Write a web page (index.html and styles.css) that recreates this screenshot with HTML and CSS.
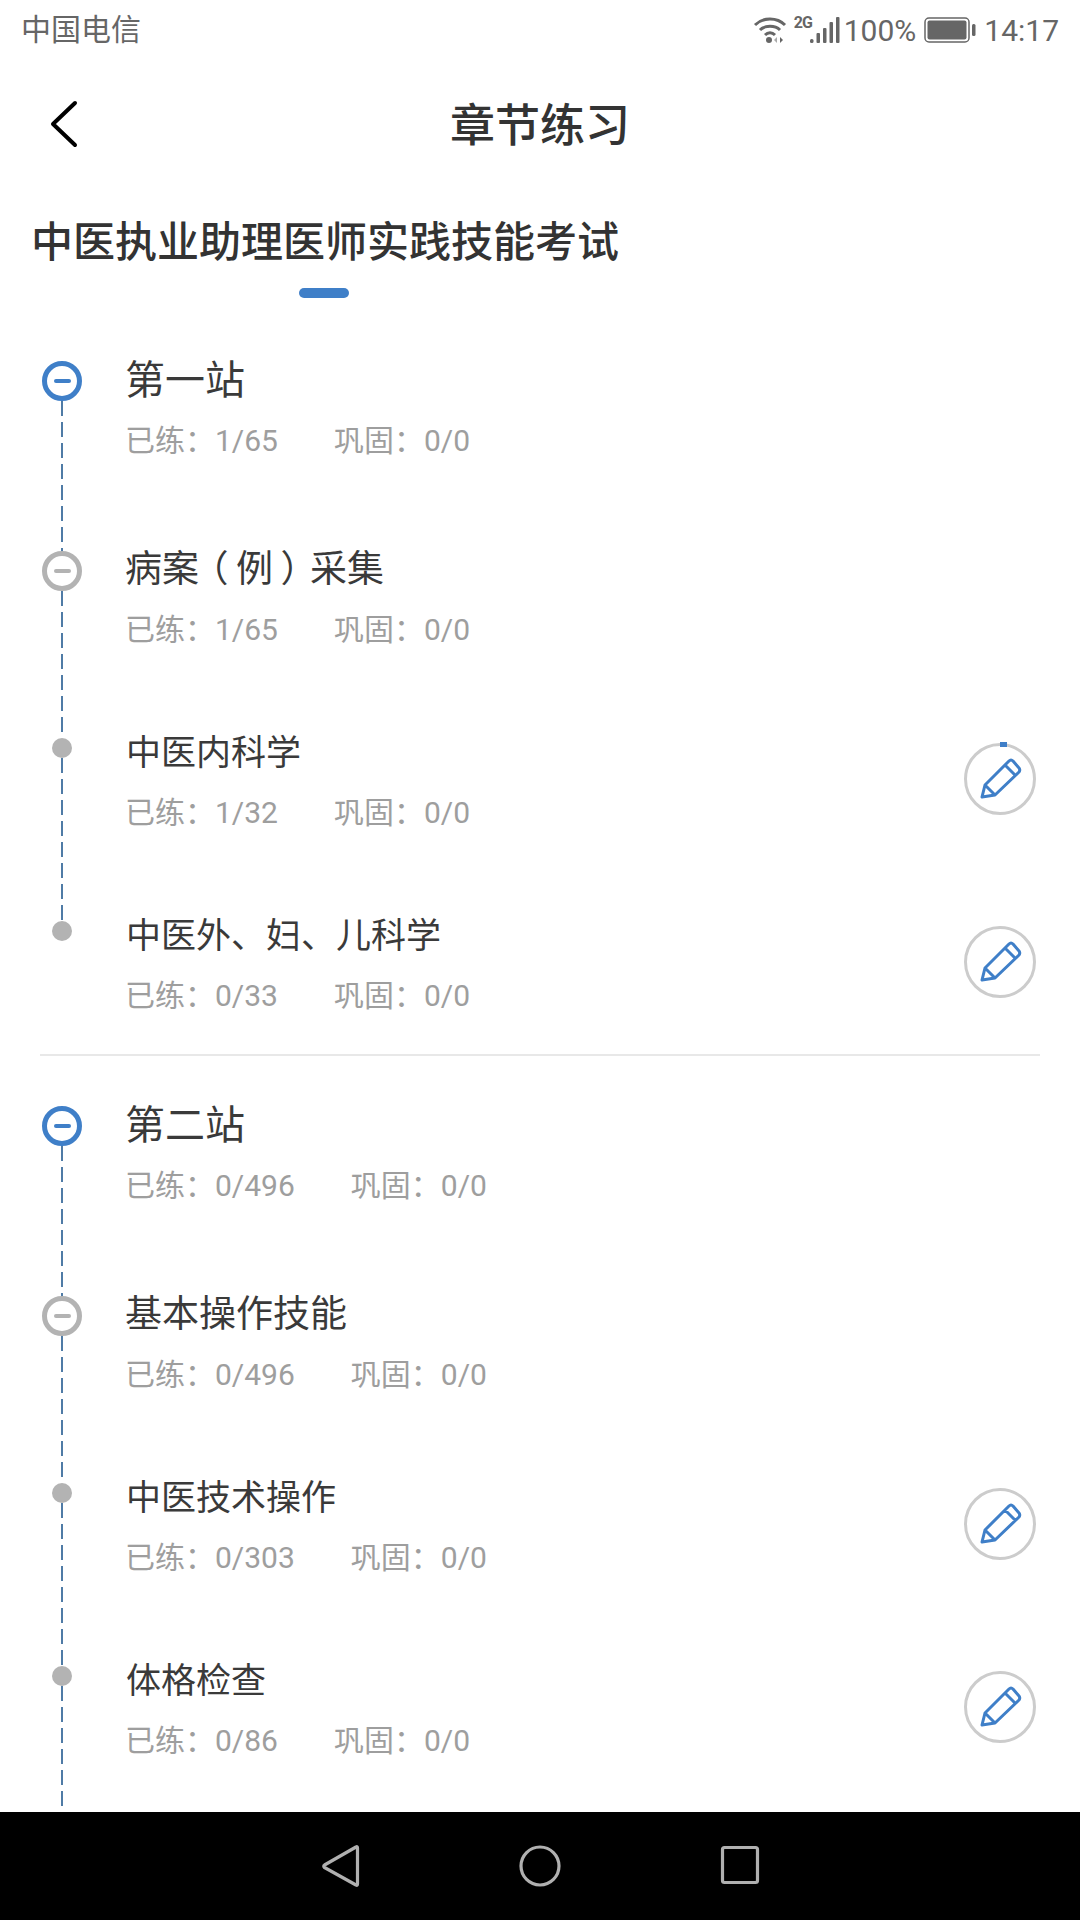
FILE: index.html
```html
<!DOCTYPE html>
<html lang="zh-CN">
<head>
    <meta charset="UTF-8">
    <title>章节练习</title>
    <meta name="viewport" content="width=device-width, initial-scale=1">
    <link rel="stylesheet" href="styles.css">
</head>
<body>
<svg class="defs" width="0" height="0">
    <symbol id="pencil" viewBox="0 0 72 72">
        <path d="M18 54 L21 42 L45 18 Q47 16 49 18 L55 25 Q56.5 27 55 29 L31 52 Z M21 42 L31 52 M41 22 L51 32" fill="none" stroke="#3f7fc8" stroke-width="3" stroke-linejoin="round"/>
    </symbol>
</svg>
<div class="statusbar">
    <div class="carrier">中国电信</div>
    <div class="status-right">
        <svg class="wifi" width="34" height="28" viewBox="0 0 34 28">
            <path d="M2 9 C10 1 24 1 32 9 M7 14 C12 9 22 9 27 14 M12 19 C15 16 19 16 22 19" fill="none" stroke="#666" stroke-width="3"/>
            <circle cx="16" cy="24" r="3" fill="#666"/>
            <path d="M24 27 V21 L21 24 Z" fill="#aaa"/>
            <path d="M27 21 V27 L30 24 Z" fill="#666"/>
        </svg>
        <span class="net">2G</span>
        <svg class="signal" width="30" height="28" viewBox="0 0 30 28">
            <rect x="0" y="23" width="3.5" height="4" rx="1.5" fill="#666"/>
            <rect x="6.500" y="17" width="3.5" height="10" rx="1" fill="#666"/>
            <rect x="13" y="12" width="3.500" height="15" rx="1" fill="#666"/>
            <rect x="19.500" y="6" width="3.500" height="21" rx="1" fill="#666"/>
            <rect x="26" y="1" width="3.500" height="26" rx="1" fill="#666"/>
        </svg>
        <span class="percent">100%</span>
        <svg class="battery" width="52" height="26" viewBox="0 0 52 26">
            <rect x="1" y="1" width="44" height="24" rx="4" fill="none" stroke="#666" stroke-width="1.500"/>
            <rect x="3.500" y="3.500" width="39" height="19" rx="2" fill="#666"/>
            <rect x="48" y="7" width="3.500" height="12" rx="1.500" fill="#666"/>
        </svg>
        <span class="clock">14:17</span>
    </div>
</div>
<div class="topbar">
    <a class="back" href="#">
        <svg width="28" height="48" viewBox="0 0 28 48">
            <path d="M25 3 L3 24 L25 45" fill="none" stroke="#000" stroke-width="4" stroke-linecap="round" stroke-linejoin="round"/>
        </svg>
    </a>
    <div class="page-title">章节练习</div>
    <div></div>
</div>
<div class="heading">
    <h1>中医执业助理医师实践技能考试</h1>
    <div class="heading-mark"></div>
</div>
<div class="list">
    <div class="section">
        <div class="row row-station">
            <div class="rail"><span class="node node-blue"></span><span class="dash"></span></div>
            <div class="info">
                <div class="name name-station">第一站</div>
                <div class="stats"><span>已练：1/65</span><span>巩固：0/0</span></div>
            </div>
        </div>
        <div class="row row-group">
            <div class="rail"><span class="node node-grey"></span><span class="dash"></span></div>
            <div class="info">
                <div class="name name-group">病案<span class="paren paren-l">（</span>例<span class="paren paren-r">）</span>采集</div>
                <div class="stats"><span>已练：1/65</span><span>巩固：0/0</span></div>
            </div>
        </div>
        <div class="row row-mid">
            <div class="rail"><span class="dot"></span><span class="dash"></span></div>
            <div class="info">
                <div class="name">中医内科学</div>
                <div class="stats"><span>已练：1/32</span><span>巩固：0/0</span></div>
            </div>
            <a class="go" href="#"><span class="go-tick"></span><svg width="72" height="72"><use href="#pencil"/></svg></a>
        </div>
        <div class="row row-end">
            <div class="rail"><span class="dot"></span></div>
            <div class="info">
                <div class="name">中医外、妇、儿科学</div>
                <div class="stats"><span>已练：0/33</span><span>巩固：0/0</span></div>
            </div>
            <a class="go" href="#"><svg width="72" height="72"><use href="#pencil"/></svg></a>
        </div>
    </div>
    <div class="section">
        <div class="row row-station">
            <div class="rail"><span class="node node-blue"></span><span class="dash"></span></div>
            <div class="info">
                <div class="name name-station">第二站</div>
                <div class="stats"><span>已练：0/496</span><span>巩固：0/0</span></div>
            </div>
        </div>
        <div class="row row-group">
            <div class="rail"><span class="node node-grey"></span><span class="dash"></span></div>
            <div class="info">
                <div class="name name-group">基本操作技能</div>
                <div class="stats"><span>已练：0/496</span><span>巩固：0/0</span></div>
            </div>
        </div>
        <div class="row row-mid">
            <div class="rail"><span class="dot"></span><span class="dash"></span></div>
            <div class="info">
                <div class="name">中医技术操作</div>
                <div class="stats"><span>已练：0/303</span><span>巩固：0/0</span></div>
            </div>
            <a class="go" href="#"><svg width="72" height="72"><use href="#pencil"/></svg></a>
        </div>
        <div class="row row-last">
            <div class="rail"><span class="dot"></span><span class="dash"></span></div>
            <div class="info">
                <div class="name">体格检查</div>
                <div class="stats"><span>已练：0/86</span><span>巩固：0/0</span></div>
            </div>
            <a class="go" href="#"><svg width="72" height="72"><use href="#pencil"/></svg></a>
        </div>
    </div>
</div>
<div class="navbar">
    <a class="nav-key" href="#">
        <svg width="44" height="48" viewBox="0 0 44 48">
            <path d="M38 5 Q39.500 4 39.500 6 V42 Q39.500 44 38 43 L6.500 25.500 Q5 24 6.500 23 Z" fill="none" stroke="#b0b0b0" stroke-width="3.200" stroke-linejoin="round"/>
        </svg>
    </a>
    <a class="nav-key" href="#">
        <svg width="44" height="48" viewBox="0 0 44 48">
            <circle cx="22" cy="24" r="19" fill="none" stroke="#b0b0b0" stroke-width="3.200"/>
        </svg>
    </a>
    <a class="nav-key" href="#">
        <svg width="44" height="48" viewBox="0 0 44 48">
            <rect x="4.500" y="5.500" width="35" height="35" rx="2" fill="none" stroke="#b0b0b0" stroke-width="3.200"/>
        </svg>
    </a>
</div>
</body>
</html>
```

FILE: styles.css
```css
* { box-sizing: border-box; }
html, body { height: 100%; }
body { margin: 0; background: #fff; color: #333; font-family: Roboto, "Noto Sans CJK SC", sans-serif; display: flex; flex-direction: column; height: 1920px; overflow: hidden; }
.defs { position: absolute; }
a { display: block; color: inherit; text-decoration: none; }

.statusbar { height: 60px; padding: 0 21px 0 21px; display: flex; align-items: center; justify-content: space-between; color: #666; flex-shrink: 0; }
.carrier { font-size: 30px; line-height: 60px; }
.status-right { display: flex; align-items: center; }
.status-right svg { display: block; }
.net { font-size: 16px; font-weight: 700; letter-spacing: -1px; width: 16px; margin: -14px 0 0 7px; line-height: 14px; }
.percent { font-size: 30px; margin-left: 4px; }
.battery { margin-left: 8px; }
.clock { font-size: 30px; margin-left: 8px; }

.topbar { height: 128px; display: grid; grid-template-columns: 1fr auto 1fr; align-items: center; padding: 0 48px; flex-shrink: 0; }
.back { margin-left: 2px; }
.back svg { display: block; }
.page-title { font-size: 45px; font-weight: 500; color: #333; margin-top: -4px; }

.heading { padding: 30px 0 0 31px; flex-shrink: 0; }
h1 { margin: 0; font-size: 42px; font-weight: 500; line-height: 50px; }
.heading-mark { width: 50px; height: 10px; border-radius: 5px; background: #3f7fc8; margin: 20px 0 0 268px; }

.list { flex: 1; overflow: hidden; padding-top: 63px; }
.section { margin: 0 40px; padding: 0 4px 0 2px; }
.section + .section { border-top: 2px solid #e8e8e8; padding-top: 50px; }
.row { display: flex; }
.row-station { height: 190px; }
.row-group { height: 187px; }
.row-mid { height: 183px; }
.row-end { height: 133px; }
.row-last { height: 183px; }

.rail { width: 40px; margin-right: 44px; display: flex; flex-direction: column; align-items: center; flex-shrink: 0; }
.node { width: 40px; height: 40px; border-radius: 50%; border: 5px solid; display: flex; align-items: center; justify-content: center; flex-shrink: 0; }
.node::before { content: ""; width: 17px; height: 4px; border-radius: 2px; background: currentColor; }
.node-blue { color: #3f7fc8; }
.node-grey { color: #b3b3b3; }
.dot { width: 20px; height: 20px; border-radius: 50%; background: #b3b3b3; flex-shrink: 0; }
.dash { flex: 1; width: 2px; background: repeating-linear-gradient(to bottom, #4f7ba6 0, #4f7ba6 15px, transparent 15px, transparent 21px); }

.info { flex: 1; margin-top: -4px; }
.name { font-size: 35px; line-height: 40px; color: #3a3a3a; }
.name-station { font-size: 40px; margin-left: -1px; }
.name-group { font-size: 37px; margin-left: -1px; }
/* brackets sit near the middle of their cell, halt gives the tight glyph to center */
.paren { display: inline-block; width: 1em; text-align: center; font-feature-settings: "halt"; }
.paren-l { padding-left: .1em; }
.paren-r { padding-right: .1em; }
.row-group .info { margin-top: -1px; }
.row-station .info { margin-top: 0; }
.stats { display: flex; gap: 56px; font-size: 30px; line-height: 40px; color: #9e9e9e; margin: 19px 0 0 -1px; }
.row-station .stats { margin-top: 20px; }
.row-group .stats { margin-top: 20px; }

.go { position: relative; width: 72px; height: 72px; margin-top: 5px; border: 3px solid #ccc; border-radius: 50%; flex-shrink: 0; }
.go svg { display: block; margin: -3px; }
.go-tick { position: absolute; left: 33px; top: -4px; width: 7px; height: 5px; background: #3f7fc8; }

.navbar { height: 108px; background: #000; display: flex; justify-content: center; align-items: center; flex-shrink: 0; }
.nav-key { width: 200px; display: flex; justify-content: center; }
.nav-key svg { display: block; }
```
